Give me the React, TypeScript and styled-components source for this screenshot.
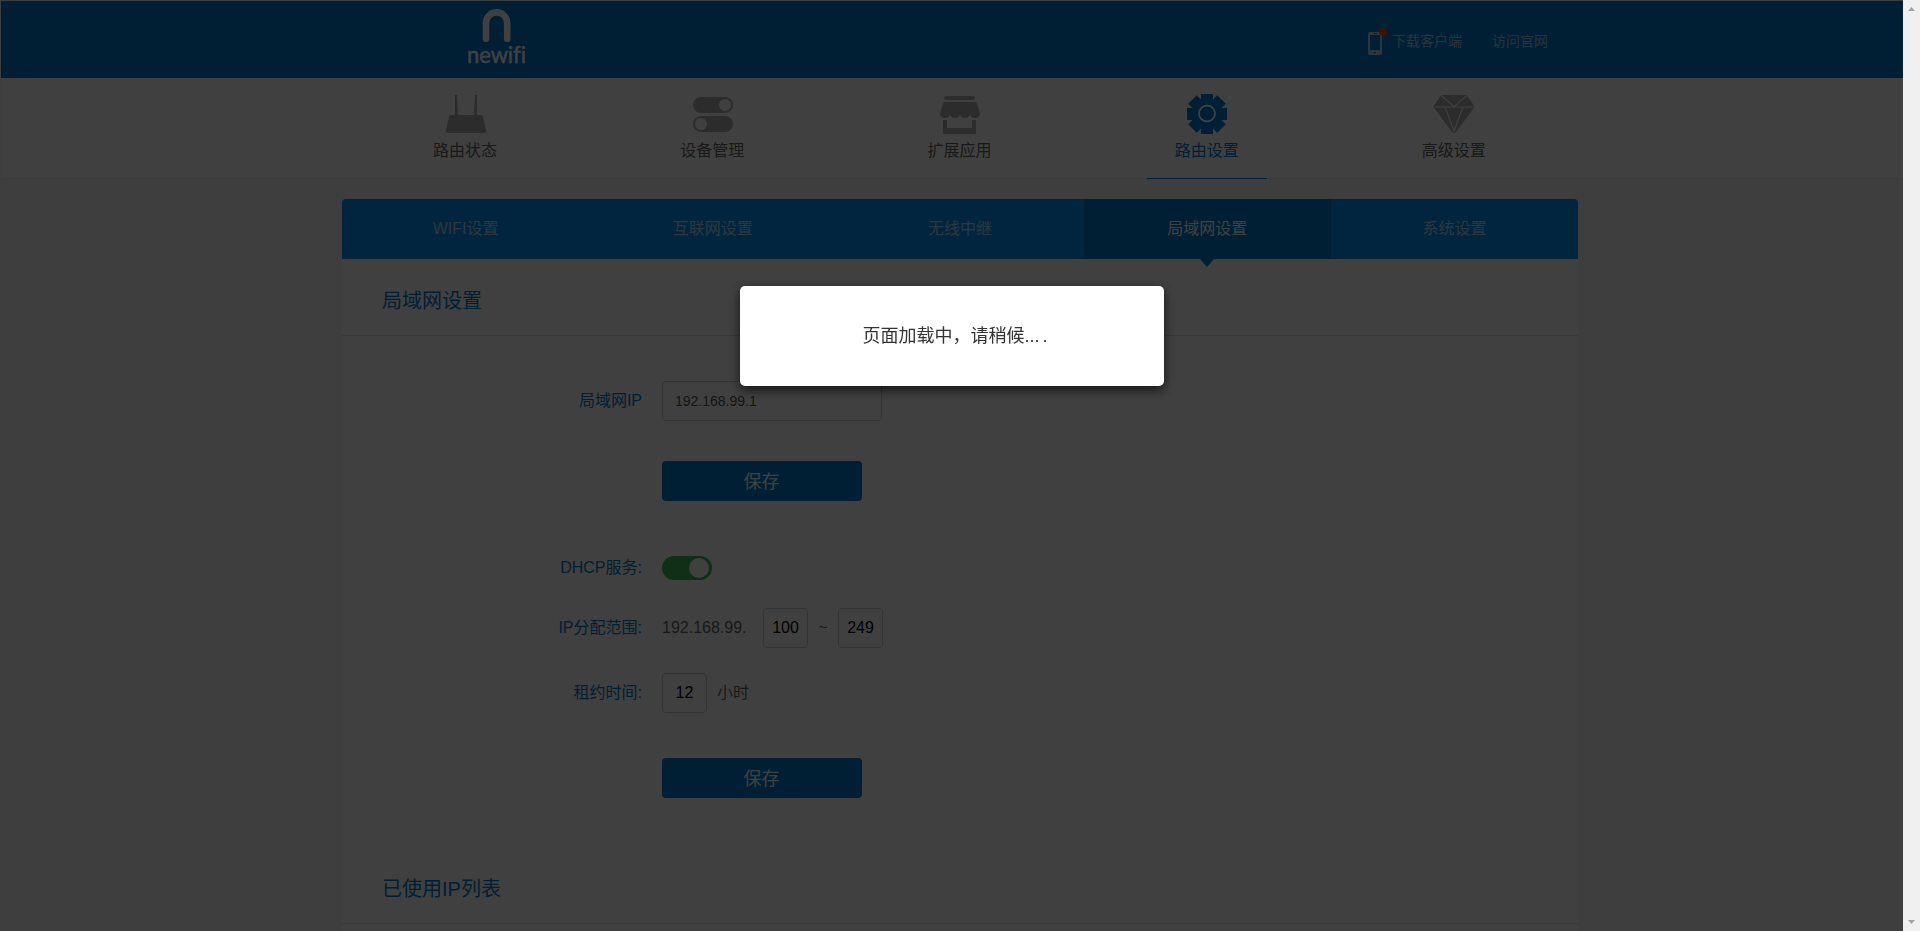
import React from 'react';
import styled, { createGlobalStyle } from 'styled-components';

const BLUE = '#007cd0';
const TAB_BLUE = '#0590fa';
const ICON_GREY = '#b0b0b0';

const GlobalStyle = createGlobalStyle`
  *, *::before, *::after { box-sizing: border-box; }
  html, body { margin: 0; height: 100%; overflow: hidden; }
  body {
    background: #f5f5f5;
    color: #666;
    font-family: "Liberation Sans", "Noto Sans CJK SC", sans-serif;
    font-size: 16px;
    font-weight: 400;
  }
`;

const Page = styled.div`
  width: 1920px;
  height: 931px;
  padding: 1px 0 0 1px;
  overflow: hidden;
`;

const Header = styled.header`
  height: 77px;
  padding-left: 463px;
  padding-right: 372px;
  display: flex;
  justify-content: space-between;
  background: ${BLUE};
`;

const HeaderLinks = styled.div`
  display: flex;
  height: 82px;
  align-items: center;
  font-size: 14px;
  line-height: 20px;
  color: rgba(255, 255, 255, 0.65);
`;

const HeaderLink = styled.span<{ $gap: number }>`
  margin-left: ${(p) => p.$gap}px;
  padding-bottom: 2px;
  white-space: nowrap;
`;

const Nav = styled.nav`
  height: 101px;
  background: #fff;
  border-bottom: 1px solid #ececec;
  padding-left: 341px;
  display: flex;
`;

const NavItem = styled.a<{ $active?: boolean }>`
  width: 247.2px;
  height: 101px;
  display: flex;
  flex-direction: column;
  align-items: center;
  padding-top: 16px;
  color: ${(p) => (p.$active ? BLUE : '#666')};

  &::after {
    content: '';
    width: 120px;
    height: 1px;
    margin-top: auto;
    background: ${(p) => (p.$active ? BLUE : 'transparent')};
  }
`;

const NavLabel = styled.span`
  line-height: 24px;
  margin-top: 5px;
  padding-right: 1px;
`;

const Panel = styled.main`
  width: 1236px;
  margin: 20px 0 0 341px;
  background: #fff;
  border-radius: 4px 4px 0 0;
`;

const Tabs = styled.div`
  display: flex;
  height: 60px;
  background: ${TAB_BLUE};
  border-radius: 4px 4px 0 0;
`;

const Tab = styled.div<{ $active?: boolean }>`
  position: relative;
  flex: 1;
  line-height: 60px;
  text-align: center;
  color: ${(p) => (p.$active ? '#fff' : 'rgba(255, 255, 255, 0.7)')};
  background: ${(p) => (p.$active ? BLUE : 'transparent')};

  &::after {
    content: '';
    display: ${(p) => (p.$active ? 'block' : 'none')};
    position: absolute;
    top: 100%;
    left: 50%;
    margin-left: -7px;
    border: 7px solid transparent;
    border-top: 8px solid ${BLUE};
    border-bottom: 0;
  }
`;

const SectionTitle = styled.h2`
  margin: 0;
  height: 77px;
  padding: 0 40px;
  border-bottom: 1px solid #e0e0e0;
  line-height: 84px;
  font-size: 20px;
  font-weight: 400;
  color: ${BLUE};
`;

const Form = styled.div`
  padding-top: 45px;
`;

const Row = styled.div<{ $height?: number; $gap?: number }>`
  display: flex;
  align-items: center;
  height: ${(p) => p.$height ?? 40}px;
  margin-bottom: ${(p) => p.$gap ?? 0}px;
`;

const Label = styled.label`
  width: 300px;
  margin-right: 20px;
  line-height: 24px;
  padding-bottom: 1px;
  text-align: right;
  color: ${BLUE};
`;

const TextInput = styled.input`
  width: 220px;
  height: 40px;
  padding: 0 12px;
  border: 1px solid #ccc;
  border-radius: 4px;
  outline: 0;
  background: #fff;
  font: 14px "Liberation Sans", sans-serif;
  color: #555;
`;

const SmallInput = styled(TextInput)`
  width: 45px;
  padding: 0;
  font-size: 16px;
  text-align: center;
  color: #000;
`;

const Text = styled.span<{ $width: number }>`
  width: ${(p) => p.$width}px;
  flex: none;
  line-height: 24px;
  padding-bottom: 1px;
  white-space: nowrap;
`;

const Separator = styled(Text)`
  text-align: center;
`;

const SaveButton = styled.button`
  width: 200px;
  height: 40px;
  margin-left: 320px;
  padding: 0 1px 2px 0;
  border: 0;
  border-radius: 4px;
  background: ${BLUE};
  color: #fff;
  font-family: inherit;
  font-size: 18px;
`;

const Toggle = styled.span`
  width: 50px;
  height: 24px;
  border-radius: 12px;
  background: #3cbc58;
  display: flex;
  justify-content: flex-end;
  align-items: center;
  padding-right: 3px;

  &::after {
    content: '';
    width: 20px;
    height: 20px;
    border-radius: 50%;
    background: #fff;
  }
`;

const Overlay = styled.div`
  position: fixed;
  inset: 0 17px 0 0;
  background: rgba(0, 0, 0, 0.75);
  display: flex;
  justify-content: center;
  align-items: flex-start;
  padding-top: 286px;
`;

const Dialog = styled.div`
  width: 424px;
  height: 100px;
  padding-left: 7px;
  border-radius: 5px;
  background: #fff;
  box-shadow: 0 4px 12px rgba(0, 0, 0, 0.7);
  font-size: 18px;
  line-height: 100px;
  color: #333;
  text-align: center;
`;

const LastDot = styled.span`
  margin-left: 3px;
`;

const ScrollTrack = styled.div`
  position: fixed;
  inset: 0 0 0 auto;
  width: 17px;
  padding: 7px 0;
  display: flex;
  flex-direction: column;
  align-items: center;
  justify-content: space-between;
  background: #f0f0f0;
`;

const Wordmark = styled.text`
  font-family: Lato, sans-serif;
  font-size: 23px;
  font-weight: 400;
  font-variant-ligatures: none;
  fill: #fff;
  stroke: #fff;
  stroke-width: 0.5px;
  stroke-linejoin: round;
`;

const Logo = () => (
  <svg width="68" height="76" viewBox="-4 0 68 76">
    <path d="M18 37.700V22a10.600 10.600 0 0 1 21.200 0v15.700" fill="none" stroke="#fff" strokeWidth="6.600" strokeLinecap="round" />
    <Wordmark x="-1" y="61.500" textLength="59" lengthAdjust="spacingAndGlyphs">newifi</Wordmark>
  </svg>
);

const PhoneIcon = () => (
  <svg width="20" height="28" viewBox="0 0 20 28">
    <path fillRule="evenodd" fill="#fff" fillOpacity=".7" d="M2 4h10a2 2 0 0 1 2 2v19a2 2 0 0 1-2 2H2a2 2 0 0 1-2-2V6a2 2 0 0 1 2-2zM2 7v15h10V7zM6 5v1h3V5zM6 24v1.200h2V24z" />
    <circle cx="15" cy="4" r="4" fill="#ff4800" />
  </svg>
);

const RouterIcon = () => (
  <svg width="40" height="40" fill={ICON_GREY}>
    <path d="M9 1h2l1 20H9zM29 1h2v20h-3z" />
    <path d="M5 21h30q1.500 0 2 1.500L40 36q.5 3-2 3H2q-2.500 0-2-3l3-13.500Q3.500 21 5 21z" />
  </svg>
);

const DevicesIcon = () => (
  <svg width="40" height="40">
    <rect y="3" width="40" height="16" rx="8" fill={ICON_GREY} />
    <circle cx="32" cy="11" r="6" fill="#fff" />
    <rect y="22" width="40" height="16" rx="8" fill={ICON_GREY} />
    <circle cx="8" cy="30" r="6" fill="#fff" />
  </svg>
);

const StoreIcon = () => (
  <svg width="40" height="40" fill={ICON_GREY}>
    <rect x="4" y="2" width="31" height="4" rx="2" />
    <path d="M4.500 8h31q1 0 1.400 1.500L40 19c0 3-2 5-5 5s-5-2-5-4c0 2-2 4-5 4s-5-2-5-4c0 2-2 4-5 4s-5-2-5-4c0 2-2 4-5 4s-5-2-5-5L3.100 9.500Q3.500 8 4.500 8z" />
    <path d="M3 26h4v8h25v-8h4v14H3z" />
  </svg>
);

const GearIcon = () => (
  <svg width="40" height="40">
    <g fill={BLUE}>
      {[0, 45, 90, 135].map((angle) => (
        <rect key={angle} x="14" y={angle % 90 ? -0.5 : 0} width="12" height={angle % 90 ? 41 : 40} transform={`rotate(${angle} 20 20)`} />
      ))}
      <circle cx="20" cy="20" r="15" />
    </g>
    <circle cx="20" cy="19.500" r="8" fill="none" stroke="#fff" strokeWidth="1.800" />
  </svg>
);

const DiamondIcon = () => (
  <svg width="40" height="40">
    <path d="M9 1h22q1.500 0 2.500 1.200L39.500 11q1 2 0 3.500L22 38q-2 2-4 0L.5 14.500q-1-1.500 0-3.500L6.500 2.200Q7.500 1 9 1z" fill={ICON_GREY} />
    <path d="M1 13h38M7.500 2L20 12.500 32.500 2M11 13l9 24 9-24" fill="none" stroke="#fff" strokeWidth="1.100" />
  </svg>
);

const navItems = [
  { label: '路由状态', Icon: RouterIcon },
  { label: '设备管理', Icon: DevicesIcon },
  { label: '扩展应用', Icon: StoreIcon },
  { label: '路由设置', Icon: GearIcon, active: true },
  { label: '高级设置', Icon: DiamondIcon },
];

const tabs = ['WIFI设置', '互联网设置', '无线中继', '局域网设置', '系统设置'];

export default function App() {
  return (
    <>
      <GlobalStyle />
      <Page>
        <Header>
          <Logo />
          <HeaderLinks>
            <PhoneIcon />
            <HeaderLink $gap={4}>下载客户端</HeaderLink>
            <HeaderLink $gap={30}>访问官网</HeaderLink>
          </HeaderLinks>
        </Header>
        <Nav>
          {navItems.map(({ label, Icon, active }) => (
            <NavItem key={label} $active={active}>
              <Icon />
              <NavLabel>{label}</NavLabel>
            </NavItem>
          ))}
        </Nav>
        <Panel>
          <Tabs>
            {tabs.map((tab) => (
              <Tab key={tab} $active={tab === '局域网设置'}>{tab}</Tab>
            ))}
          </Tabs>
          <SectionTitle>局域网设置</SectionTitle>
          <Form>
            <Row $gap={40}>
              <Label>局域网IP</Label>
              <TextInput defaultValue="192.168.99.1" />
            </Row>
            <Row $gap={55}>
              <SaveButton>保存</SaveButton>
            </Row>
            <Row $height={24} $gap={28}>
              <Label>DHCP服务:</Label>
              <Toggle />
            </Row>
            <Row $gap={25}>
              <Label>IP分配范围:</Label>
              <Text $width={101}>192.168.99.</Text>
              <SmallInput defaultValue="100" />
              <Separator $width={30}>~</Separator>
              <SmallInput defaultValue="249" />
            </Row>
            <Row $gap={45}>
              <Label>租约时间:</Label>
              <SmallInput defaultValue="12" />
              <Separator $width={52}>小时</Separator>
            </Row>
            <Row $gap={49}>
              <SaveButton>保存</SaveButton>
            </Row>
          </Form>
          <SectionTitle>已使用IP列表</SectionTitle>
          <Form />
        </Panel>
      </Page>
      <Overlay>
        <Dialog>页面加载中，请稍候...<LastDot>.</LastDot></Dialog>
      </Overlay>
      <ScrollTrack>
        <svg width="7" height="4"><path d="M3.500 0L7 4H0z" fill="#a3a3a3" /></svg>
        <svg width="7" height="4"><path d="M0 0h7L3.500 4z" fill="#a3a3a3" /></svg>
      </ScrollTrack>
    </>
  );
}
